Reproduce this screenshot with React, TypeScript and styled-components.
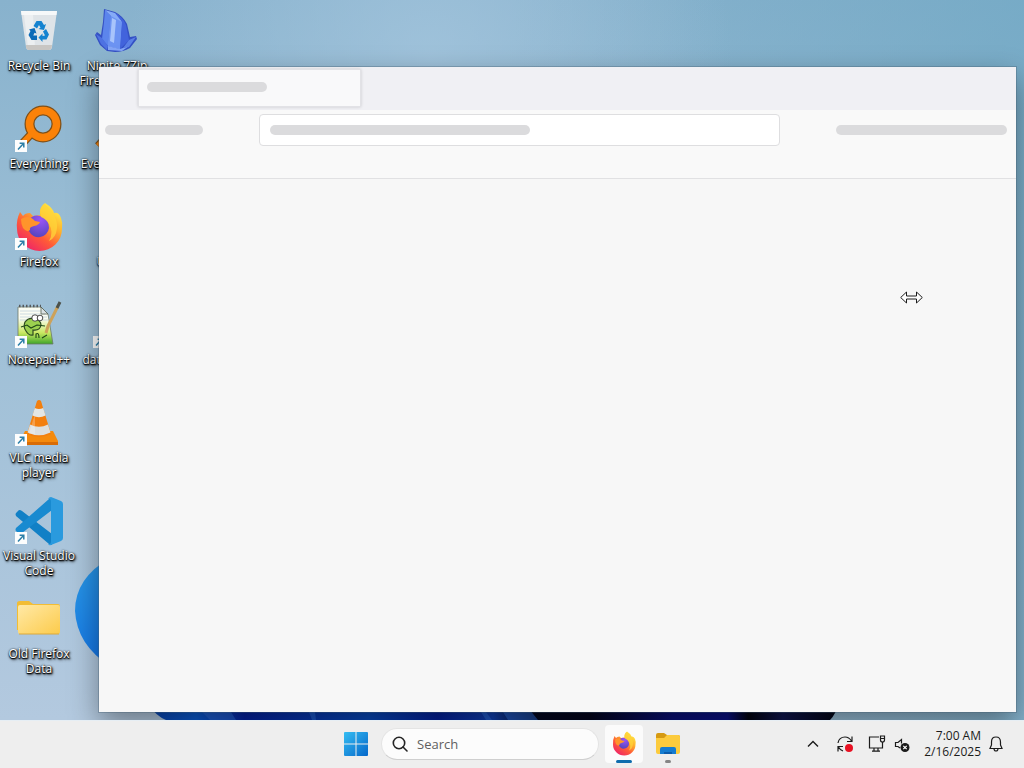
import type { ReactNode } from 'react'
import styled, { createGlobalStyle } from 'styled-components'


const GlobalStyle = createGlobalStyle`
    * {
        box-sizing: border-box;
    }

    body {
        margin: 0;
        font-family: 'Open Sans', 'Noto Sans', sans-serif;
        font-size: 12px;
    }

    button {
        padding: 0;
        border: 0;
        background: none;
        color: inherit;
        font: inherit;
    }
`

const Screen = styled.div`
    min-height: 100vh;

    display: flex;
    flex-direction: column;
`

const Desktop = styled.main`
    flex: 1;
    position: relative;
    overflow: hidden;
    background:
        radial-gradient(circle at 42% 8%, rgba(165, 198, 222, 0.75) 0, rgba(165, 198, 222, 0) 34%),
        linear-gradient(90deg, rgba(112, 168, 196, 0) 50%, rgba(112, 168, 196, 0.7) 100%),
        linear-gradient(180deg, #88b2cd 0%, #9dbfd6 40%, #b3c9df 100%);
`

const Wallpaper = styled.svg`
    position: absolute;
    inset: 0;
    width: 100%;
    height: 100%;
`

const IconGrid = styled.div`
    position: relative;

    display: grid;
    grid-auto-flow: column;
    grid-template-rows: repeat(7, 98px);
    grid-auto-columns: 78px;
    justify-content: start;
`

const Shortcut = styled.button`
    padding-top: 8px;

    display: flex;
    flex-direction: column;
    align-items: center;
    gap: 2px;
`

const ShortcutLabel = styled.span`
    width: 76px;
    color: #fff;
    line-height: 15px;
    text-align: center;
    text-shadow: 0 1px 1px #000, 1px 1px 2px #000, 0 0 2px rgba(0, 0, 0, 0.8), 1px 2px 3px rgba(0, 0, 0, 0.7);
`

const BrowserWindow = styled.section`
    position: absolute;
    inset: 67px 8px 8px 99px;
    background: #f7f7f7;
    outline: 1px solid rgba(70, 95, 115, 0.35);
    outline-offset: 0;
    box-shadow: 0 12px 28px rgba(0, 0, 0, 0.4);

    display: flex;
    flex-direction: column;
`

const TabStrip = styled.div`
    padding: 2px 39px 3px;
    background: #f0f0f4;
`

const Tab = styled.div`
    width: 223px;
    height: 38px;
    padding: 12px 8px;
    border: 1px solid #e2e2e6;
    background: #f9f9fa;
    box-shadow: 0 0 3px rgba(0, 0, 0, 0.16);
`

const Toolbar = styled.div`
    padding: 4px 9px 32px 6px;
    border-bottom: 1px solid #e1e1e3;
    background: #f9f9f9;

    display: grid;
    grid-template-columns: 98px 1fr 171px;
    align-items: center;
    gap: 56px;
`

const UrlField = styled.div`
    height: 32px;
    padding: 0 10px;
    border: 1px solid #dedee0;
    border-radius: 4px;
    background: #fff;

    display: flex;
    align-items: center;
`

const Placeholder = styled.div<{ $width?: number }>`
    width: ${({ $width }) => ($width ? `${$width}px` : '100%')};
    height: 10px;
    border-radius: 5px;
    background: #dbdbdd;
`

const ResizeCursor = styled.svg`
    position: absolute;
    top: 224px;
    right: 93px;
`

const Taskbar = styled.footer`
    height: 48px;
    background: #eeeeee;
    box-shadow: inset 0 1px 0 #e6eef4;
    color: #1b1b1b;

    display: grid;
    grid-template-columns: 1fr auto 1fr;
    align-items: center;
`

const TaskbarApps = styled.nav`
    grid-column: 2;

    display: flex;
    align-items: center;
    gap: 6px;
`

const TaskButton = styled.button<{ $active?: boolean }>`
    position: relative;
    width: 38px;
    height: 38px;
    border-radius: 4px;
    background: ${({ $active }) => ($active ? '#fbfbfb' : 'transparent')};

    display: flex;
    align-items: center;
    justify-content: center;
`

const Indicator = styled.span<{ $active?: boolean }>`
    position: absolute;
    bottom: 0;
    width: ${({ $active }) => ($active ? 16 : 6)}px;
    height: 3px;
    border-radius: 2px;
    background: ${({ $active }) => ($active ? '#0f6cad' : '#858585')};
`

const SearchBox = styled.label`
    width: 218px;
    height: 32px;
    padding: 0 10px;
    border: 1px solid #e4e4e4;
    border-bottom-color: #cfcfcf;
    border-radius: 16px;
    background: #fcfcfc;

    display: flex;
    align-items: center;
    gap: 9px;
`

const SearchInput = styled.input`
    flex: 1;
    min-width: 0;
    padding: 0;
    border: 0;
    outline: 0;
    background: none;
    font: inherit;
    font-size: 13px;

    &::placeholder {
        color: #606060;
        opacity: 1;
    }
`

const Tray = styled.div`
    padding-right: 16px;

    display: flex;
    align-items: center;
    justify-content: flex-end;
`

const TrayButton = styled.button<{ $width: number }>`
    width: ${({ $width }) => $width}px;
    height: 32px;

    display: flex;
    align-items: center;
    justify-content: center;
`

const Clock = styled.button`
    margin: 0 3px 0 13px;
    line-height: 16px;
    text-align: right;
`

function ShortcutArrow() {
    return (
        <g>
            <rect x="0" y="34" width="12" height="12" fill="#fdfdfd" />
            <path d="M3 43.5 L8.5 37.5 M4.6 37.2 H8.8 V41.5" fill="none" stroke="#2c7fa8" strokeWidth="1.5" />
        </g>
    )
}

function RecycleBinArt() {
    return (
        <>
            <path d="M6 3 H42 L37 39 Q36.500 42 34 42 H14 Q11.500 42 11 39 Z" fill="#dfe4e8" />
            <path d="M6 3 H42 L41.500 7 H6.500 Z" fill="#f6f8f9" />
            <path d="M9 7 L13 39 H20 L18 7 Z" fill="#eceff1" />
            <path d="M11 37 H37 L36.600 40 Q36 42 34 42 H14 Q11.500 42 11 39 Z" fill="#c8c6c3" />
            <g fill="#1583d0">
                <path d="M18.500 18 L21.500 13 H26.500 L29 17 L31 16 L29 22 L23.500 21 L25.500 19.700 L24 17 L22 20.500 Z" />
                <path d="M31 21 L34 26.500 L31.500 31.500 H27.500 V34 L23.500 29.500 L27.500 25.500 V28 L30 27.500 L28 23.500 Z" />
                <path d="M14 21.500 L19.500 20 L21.500 25.500 L19.500 24.700 L18.300 27.500 H22 V32 H16.500 L13.500 27 L15.500 23 Z" fill="#0d6bb8" />
            </g>
        </>
    )
}

function NiniteArt() {
    return (
        <>
            <path d="M11 1 L22 4 Q30 8 34 16 L37 29 L43 28 L44 31 L37 40 Q30 44 22 44 L14 43 L7 37 L2 27 L4 24 L8 27 L10 14 Z" fill="#3450c4" />
            <path d="M12 2 L18 8 L15 38 L9 31 L11 14 Z" fill="#5c85ec" />
            <path d="M12 2 L22 5 Q27 8 29 14 L27 41 L15 38 L18 8 Z" fill="#86abf7" />
            <path d="M18 8 L29 14 L27 41 L15 38 Z" fill="#6c93f2" />
            <path d="M19 10 L23 12 L21 35 L17 33 Z" fill="#a8c4fb" />
            <path d="M22 5 Q30 9 33 17 L36 32 L27 41 L29 14 Z" fill="#4263dc" />
            <path d="M3 26 L9 30 L15 38 L14 42 L8 36 Z" fill="#4e72e2" />
            <path d="M15 38 L27 41 L36 38 L29 43 L15 42 Z" fill="#83a5f6" />
            <path d="M36 32 L43 29 L36 39 L30 40 Z" fill="#5b80e6" />
        </>
    )
}

function EverythingArt() {
    return (
        <>
            <circle cx="28" cy="18" r="13.500" fill="none" stroke="#7e5019" strokeWidth="10" />
            <path d="M18 26 L5 40" stroke="#7e5019" strokeWidth="8" />
            <circle cx="28" cy="18" r="13.500" fill="none" stroke="#fb8208" strokeWidth="7.500" />
            <path d="M19 25 L5 40" stroke="#fb8208" strokeWidth="5.500" />
        </>
    )
}

function FirefoxArt() {
    return (
        <>
            <defs>
                <linearGradient id="fox-body" x1="0.85" y1="0.05" x2="0.2" y2="0.95">
                    <stop offset="0" stopColor="#fff04a" />
                    <stop offset="0.35" stopColor="#ffb02b" />
                    <stop offset="0.65" stopColor="#ff5a38" />
                    <stop offset="1" stopColor="#ee2468" />
                </linearGradient>
                <radialGradient id="fox-globe" cx="0.6" cy="0.2" r="0.9">
                    <stop offset="0" stopColor="#9a55f6" />
                    <stop offset="1" stopColor="#4f43b8" />
                </radialGradient>
            </defs>
            <path d="M30 -1 Q38 4 39 9 Q44 8 46 14 Q48 19 47 25 A22.500 22 0 0 1 2 25 Q1 16 5 8 L8 12 Q10 9 15 9 L18 12 L25 11 Q24 3 30 -1 Z" fill="url(#fox-body)" />
            <path d="M13 17 Q18 10 25 12 Q34 15 34 24 A10.500 10.500 0 0 1 14 27 Z" fill="url(#fox-globe)" />
            <path d="M6 15 Q14 10 20 17 L25 18 Q24 21 19 22 Q14 23 15 26 Q12 29 8 24 Q6 20 6 15 Z" fill="#ff942b" />
            <path d="M29 0 Q43 11 42 24 Q41 34 34 37 Q39 28 34 20 Q31 15 26 13 Q23 5 29 0 Z" fill="#ffd53a" opacity="0.75" />
        </>
    )
}

function NotepadArt() {
    return (
        <>
            <defs>
                <linearGradient id="note-paper" x1="0" y1="0" x2="0" y2="1">
                    <stop offset="0.3" stopColor="#fbfdf3" />
                    <stop offset="0.7" stopColor="#c8e860" />
                    <stop offset="1" stopColor="#3fa52a" />
                </linearGradient>
            </defs>
            <path d="M3 5 H26 L33 12 L38 42 H3 Z" fill="url(#note-paper)" stroke="#6c7767" strokeWidth="0.800" />
            <path d="M4 4 H26" stroke="#55595c" strokeWidth="2.500" strokeDasharray="1.500 2" />
            <path d="M5 9 H27 M5 12 H30 M5 15 H32 M5 18 H33" stroke="#c3d2dc" strokeWidth="0.800" />
            <path d="M26 5 V12 H33 Z" fill="#d9e1e4" stroke="#55604f" strokeWidth="0.800" />
            <path d="M10 20 Q14 15 19 17 Q26 18 26 23 Q25 29 18 28 L18 33 Q14 34 11 29 Q8 25 10 20 Z" fill="#9bd04f" stroke="#2c4a21" strokeWidth="1.200" />
            <circle cx="20" cy="16" r="3.200" fill="#fff" stroke="#222" strokeWidth="0.800" />
            <circle cx="25" cy="16" r="2.800" fill="#fff" stroke="#222" strokeWidth="0.800" />
            <path d="M6 25 L12 23 L16 26 L22 23 L30 24 M21 36 V32 Q24 30 24 36 M27 36 L32 33" fill="none" stroke="#1e4717" strokeWidth="1.100" />
            <path d="M43 4 L33 24 L31 31" fill="none" stroke="#cda25a" strokeWidth="3" />
            <path d="M45 0 L42 6" stroke="#4c514a" strokeWidth="3" />
        </>
    )
}

function VlcArt() {
    return (
        <>
            <path d="M10 31 H38 L43 41 V45 H5 V41 Z" fill="#f58a0c" />
            <path d="M5 42 H43 V45 H5 Z" fill="#d96c05" />
            <path d="M22 1 Q24 -1 26 1 L36 34 Q24 40 12 34 Z" fill="#f37f0e" />
            <path d="M19.800 8 Q24 10 28.200 8 L30.500 15.500 Q24 19 17.500 15.500 Z" fill="#e3e6e5" />
            <path d="M15 24.500 Q24 29 33 24.500 L35.500 32.500 Q24 38 12.500 32.500 Z" fill="#dcdfde" />
            <path d="M18 20 L20 15 L20 34 L14 34 Z" fill="#fff" opacity="0.25" />
        </>
    )
}

function CodeArt() {
    return (
        <>
            <path d="M1 15 L4 12 Q6 12 7 13 L37 36 V47 L34 46 L1 18 Q0 16 1 15 Z" fill="#1180c6" />
            <path d="M1 33 L4 36 Q6 36 7 35 L37 12 V0 L34 1 L1 30 Q0 32 1 33 Z" fill="#188ad0" />
            <path d="M36 -1 L46 3 Q48 4 48 6 V40 Q48 42 46 43 L36 47 Q34 48 33 46 Q36 47 36 43 V4 Q36 0 33 1 Q34 -1 36 -1 Z" fill="#2a9ade" />
        </>
    )
}

function FolderArt() {
    return (
        <>
            <defs>
                <linearGradient id="folder-front" x1="0" y1="0" x2="1" y2="1">
                    <stop offset="0" stopColor="#ffe9a6" />
                    <stop offset="1" stopColor="#fccb4b" />
                </linearGradient>
            </defs>
            <path d="M2 7 Q2 5 5 5 H14 L18 8 H43 Q45 8 45 10 V34 H2 Z" fill="#f2bd34" />
            <path d="M3 11 Q3 9 5 9 H43 Q45 9 45 11 V36 Q45 38 43 38 H5 Q3 38 3 36 Z" fill="url(#folder-front)" />
            <path d="M4 38 H44" stroke="#dca93a" strokeWidth="1" />
        </>
    )
}

function PageArt() {
    return <path d="M18 4 H34 V42 H18 Z" fill="#f4f6f7" />
}

type ShortcutItem = {
    label: string
    art: ReactNode
    arrow?: boolean
}

const shortcuts: ShortcutItem[] = [
    { label: 'Recycle Bin', art: <RecycleBinArt /> },
    { label: 'Everything', art: <EverythingArt />, arrow: true },
    { label: 'Firefox', art: <FirefoxArt />, arrow: true },
    { label: 'Notepad++', art: <NotepadArt />, arrow: true },
    { label: 'VLC media player', art: <VlcArt />, arrow: true },
    { label: 'Visual Studio Code', art: <CodeArt />, arrow: true },
    { label: 'Old Firefox Data', art: <FolderArt /> },
    { label: 'Ninite 7Zip Firefox Install', art: <NiniteArt /> },
    { label: 'Everything-1.', art: <EverythingArt /> },
    { label: 'Update', art: <PageArt /> },
    { label: 'database-01', art: <PageArt />, arrow: true },
]

function Bloom() {
    return (
        <Wallpaper viewBox="0 0 1024 720" preserveAspectRatio="xMidYMax slice" aria-hidden="true">
            <defs>
                <linearGradient id="petal" x1="0" y1="0" x2="0.3" y2="1">
                    <stop offset="0" stopColor="#2b9be6" />
                    <stop offset="1" stopColor="#1577e6" />
                </linearGradient>
                <linearGradient id="base" x1="0" y1="0" x2="1" y2="0">
                    <stop offset="0" stopColor="#0a44b0" />
                    <stop offset="0.07" stopColor="#0b5bd0" />
                    <stop offset="0.14" stopColor="#0522a0" />
                    <stop offset="0.32" stopColor="#0848b8" />
                    <stop offset="0.42" stopColor="#04209a" />
                    <stop offset="0.5" stopColor="#1040b0" />
                    <stop offset="0.56" stopColor="#040720" />
                    <stop offset="0.64" stopColor="#03051c" />
                    <stop offset="0.76" stopColor="#0a0f78" />
                    <stop offset="0.84" stopColor="#0a1184" />
                    <stop offset="0.87" stopColor="#02030f" />
                    <stop offset="0.92" stopColor="#101650" />
                    <stop offset="1" stopColor="#020412" />
                </linearGradient>
            </defs>
            <path d="M110 558 Q75 578 75 611 Q77 645 110 666 Z" fill="url(#petal)" />
            <path d="M148 704 H838 Q836 714 830 720 H166 Q156 716 148 704 Z" fill="url(#base)" />
            <path d="M194 704 L210 720 H236 L226 704 Z M306 704 L312 720 H316 L314 704 Z M476 704 L486 720 H492 L480 704 Z M498 704 L508 720 H538 L525 704 Z" fill="#2a67d4" opacity="0.6" />
        </Wallpaper>
    )
}

function StartIcon() {
    return (
        <svg width="24" height="24" viewBox="0 0 24 24" aria-hidden="true">
            <defs>
                <linearGradient id="start-pane" x1="0" y1="0" x2="24" y2="24" gradientUnits="userSpaceOnUse">
                    <stop offset="0" stopColor="#35bdf2" />
                    <stop offset="1" stopColor="#0567ca" />
                </linearGradient>
            </defs>
            <path d="M0 1 Q0 0 1 0 H11.500 V11.500 H0 Z M12.500 0 H23 Q24 0 24 1 V11.500 H12.500 Z M0 12.500 H11.500 V24 H1 Q0 24 0 23 Z M12.500 12.500 H24 V23 Q24 24 23 24 H12.500 Z" fill="url(#start-pane)" />
        </svg>
    )
}

function ExplorerIcon() {
    return (
        <svg width="26" height="24" viewBox="0 0 26 24" aria-hidden="true">
            <path d="M1 3 Q1 1 3 1 H9 L12 3 H23 Q25 3 25 5 V20 H1 Z" fill="#d69a12" />
            <path d="M1 6 H9 L12 3 H23 Q25 3 25 5 V20 Q25 22 23 22 H3 Q1 22 1 20 Z" fill="#fccb3d" />
            <path d="M5 22 V17 Q5 15 7 15 H19 Q21 15 21 17 V22 Z" fill="#157cd0" />
            <path d="M9 22 V20 H17 V22 Z" fill="#0c5cab" />
        </svg>
    )
}

function SearchIcon() {
    return (
        <svg width="16" height="16" viewBox="0 0 16 16" fill="none" stroke="#242424" strokeWidth="1.6" aria-hidden="true">
            <circle cx="7" cy="7" r="5.700" />
            <path d="M11 11 L15 15" strokeLinecap="round" />
        </svg>
    )
}

function TrayIcon({ children }: { children: ReactNode }) {
    return (
        <svg width="18" height="18" viewBox="0 0 18 18" fill="none" stroke="#1b1b1b" strokeWidth="1.2" aria-hidden="true">
            {children}
        </svg>
    )
}

const App = () => {
    return (
        <Screen>
            <GlobalStyle />

            <Desktop>
                <Bloom />

                <IconGrid>
                    {shortcuts.map((item) => (
                        <Shortcut key={item.label}>
                            <svg width="48" height="48" viewBox="0 0 48 48" overflow="visible" aria-hidden="true">
                                {item.art}
                                {item.arrow && <ShortcutArrow />}
                            </svg>
                            <ShortcutLabel>{item.label}</ShortcutLabel>
                        </Shortcut>
                    ))}
                </IconGrid>

                <BrowserWindow>
                    <TabStrip>
                        <Tab>
                            <Placeholder $width={120} />
                        </Tab>
                    </TabStrip>
                    <Toolbar>
                        <Placeholder />
                        <UrlField>
                            <Placeholder $width={260} />
                        </UrlField>
                        <Placeholder />
                    </Toolbar>
                    <ResizeCursor width="23" height="13" viewBox="0 0 23 13" aria-hidden="true">
                        <path d="M0.700 6.500 L6.500 1 V5 H16.500 V1 L22.300 6.500 L16.500 12 V8 H6.500 V12 Z" fill="#fff" stroke="#1c1c1c" strokeWidth="1" />
                    </ResizeCursor>
                </BrowserWindow>
            </Desktop>

            <Taskbar>
                <TaskbarApps>
                    <TaskButton aria-label="Start">
                        <StartIcon />
                    </TaskButton>
                    <SearchBox>
                        <SearchIcon />
                        <SearchInput type="text" placeholder="Search" aria-label="Search" />
                    </SearchBox>
                    <TaskButton $active aria-label="Firefox">
                        <svg width="24" height="24" viewBox="0 0 48 48" overflow="visible" aria-hidden="true">
                            <FirefoxArt />
                        </svg>
                        <Indicator $active />
                    </TaskButton>
                    <TaskButton aria-label="File Explorer">
                        <ExplorerIcon />
                        <Indicator />
                    </TaskButton>
                </TaskbarApps>

                <Tray>
                    <TrayButton $width={32} aria-label="Show hidden icons">
                        <TrayIcon>
                            <path d="M4 11.500 L9 6.500 L14 11.500" strokeWidth="1.4" />
                        </TrayIcon>
                    </TrayButton>
                    <TrayButton $width={32} aria-label="Updates">
                        <TrayIcon>
                            <path d="M2 8 Q3 2 9 2 Q13 2 15.500 6 M16 1.500 V6.500 H11 M7 16 Q4 15 2.500 12 M2 16.500 V11.500 H7" />
                            <circle cx="13" cy="13" r="4" fill="#e81123" stroke="none" />
                        </TrayIcon>
                    </TrayButton>
                    <TrayButton $width={32} aria-label="Network">
                        <TrayIcon>
                            <path d="M11 2 H1.500 V13 H14.500 V9 M6 13 V16 M10 13 V16 M4 16.200 H12 M12.500 1 H16.500 V5 Q16.500 7 14.500 7 Q12.500 7 12.500 5 Z M12.500 3.500 H16.500 M14.500 7 V13" />
                        </TrayIcon>
                    </TrayButton>
                    <TrayButton $width={18} aria-label="Volume muted">
                        <TrayIcon>
                            <path d="M7 13 L5 11.500 H2.500 V7.500 H5 L8.500 4.500 V8.500" />
                            <circle cx="12" cy="12.500" r="4.500" fill="#1b1b1b" stroke="none" />
                            <path d="M10.300 10.800 L13.700 14.200 M13.700 10.800 L10.300 14.200" stroke="#fff" />
                        </TrayIcon>
                    </TrayButton>
                    <Clock>
                        7:00 AM
                        <br />
                        2/16/2025
                    </Clock>
                    <TrayButton $width={24} aria-label="Notifications">
                        <TrayIcon>
                            <path d="M9 2 Q4.500 2 4.500 7 V10 L3 13.500 H15 L13.500 10 V7 Q13.500 2 9 2 Z M7 13.500 Q7 16 9 16 Q11 16 11 13.500" />
                        </TrayIcon>
                    </TrayButton>
                </Tray>
            </Taskbar>
        </Screen>
    )
}

export default App
